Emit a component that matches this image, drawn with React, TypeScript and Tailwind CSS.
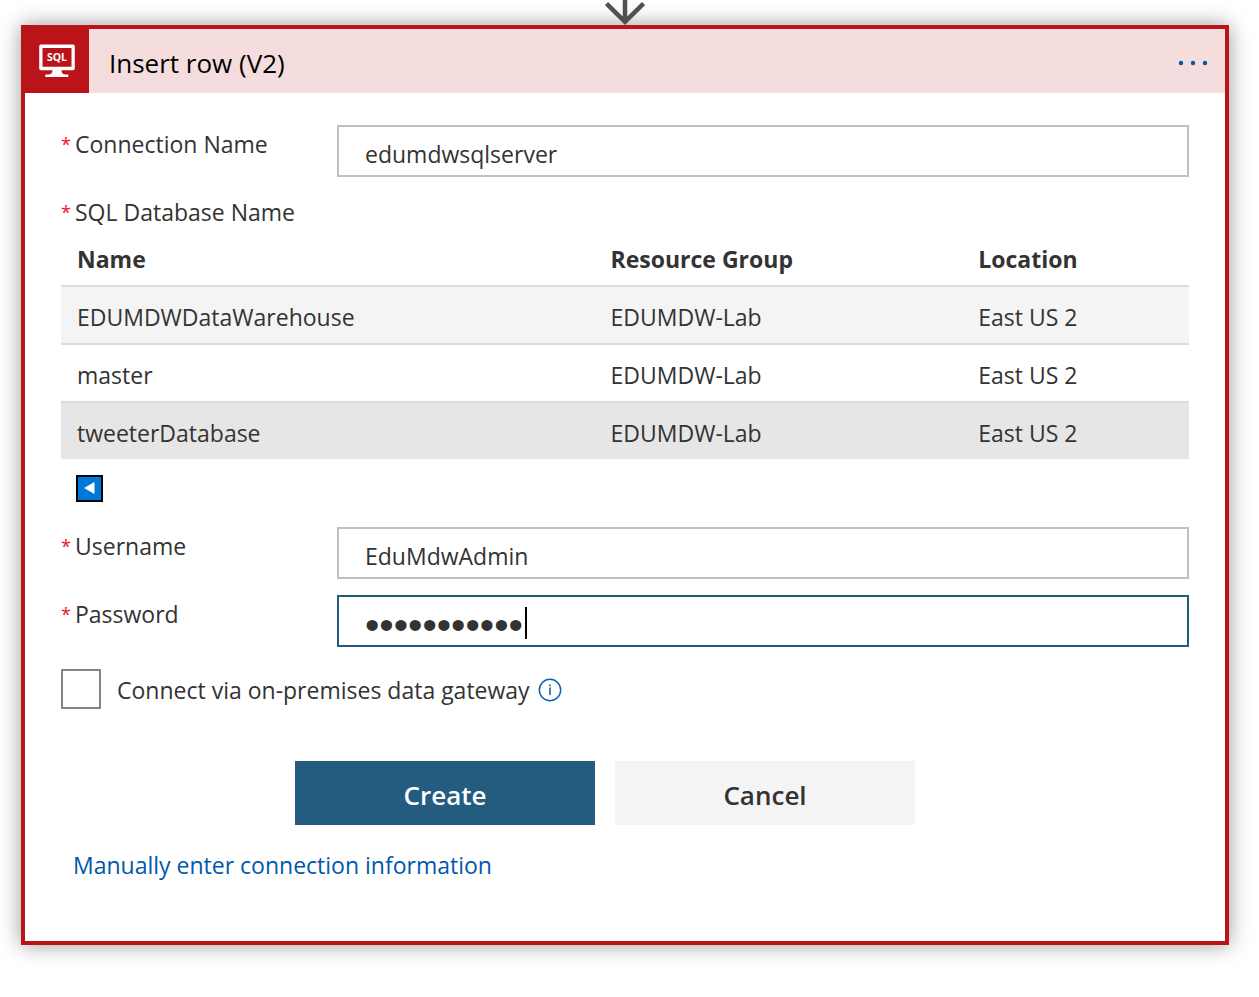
import { useState } from "react";
import type { ReactNode } from "react";

const databases = [
  { name: "EDUMDWDataWarehouse", group: "EDUMDW-Lab", location: "East US 2", row: "bg-[#f4f4f4]" },
  { name: "master", group: "EDUMDW-Lab", location: "East US 2", row: "bg-white" },
  { name: "tweeterDatabase", group: "EDUMDW-Lab", location: "East US 2", row: "bg-[#e6e6e6]" },
];

const inputClass = "block h-[52px] w-full border-2 bg-white px-[26px] leading-8 outline-none";
const cellClass = "border-t-2 border-[#dcdcdc] px-4 pt-1 pb-0";

function Required() {
  return <span className="w-[14px] shrink-0 text-[18px] text-[#e81123]">*</span>;
}

function Field({ id, label, children }: { id: string; label: string; children: ReactNode }) {
  return (
    <div className="flex items-start">
      <label htmlFor={id} className="flex w-[276px] shrink-0 leading-[38px]">
        <Required />
        {label}
      </label>
      <div className="relative min-w-0 grow">{children}</div>
    </div>
  );
}

function SqlIcon() {
  return (
    <svg width="36" height="34" viewBox="0 0 36 34" aria-hidden="true">
      <path
        fill="#fff"
        fillRule="evenodd"
        d="M2 0.500h32a1.800 1.800 0 0 1 1.800 1.800v22.200a1.800 1.800 0 0 1-1.800 1.800H22.500c0 2.700 1 3.700 3.500 4.200h3.300V33h-23v-2.500h3.500c2.500-.5 3.700-1.500 3.700-4.200H2a1.800 1.800 0 0 1-1.800-1.800V2.300A1.800 1.800 0 0 1 2 .5zM3.500 4v18.700h29V4z"
      />
      <text x="18" y="17" textAnchor="middle" fill="#fff" fontSize="10.500" fontWeight="700" fontFamily="Open Sans, sans-serif">
        SQL
      </text>
    </svg>
  );
}

export default function App() {
  const [name, setName] = useState("edumdwsqlserver");
  const [user, setUser] = useState("EduMdwAdmin");
  const [password, setPassword] = useState("placeholder");

  return (
    <main className="bg-white pr-[30px] pb-[52px] pl-[21px] font-['Open_Sans',sans-serif] text-[23px] text-[#333]">
      <div className="flex h-[25px] justify-center">
        <svg width="40" height="25" viewBox="0 0 40 25" className="relative z-10" aria-hidden="true">
          <path d="M20 -4V21M1.500 3.500L20 21.800L38.500 3.500" fill="none" stroke="#505050" strokeWidth="4.500" />
        </svg>
      </div>

      <section className="border-4 border-[#ba141a] bg-white shadow-[0_0_20px_rgba(0,0,0,0.4)]">
        <header className="flex h-16 items-center bg-[#f5dcdd]">
          <div className="flex h-16 w-16 items-center justify-center bg-[#ba141a]">
            <SqlIcon />
          </div>
          <h1 className="grow pt-1 pl-5 text-[26px] text-black">Insert row (V2)</h1>
          <button type="button" aria-label="More options" className="mr-4 flex h-10 w-8 items-center justify-center pt-1">
            <svg width="30" height="6" viewBox="0 0 30 6" fill="#0058ad" aria-hidden="true">
              <circle cx="3" cy="3" r="2.200" />
              <circle cx="15" cy="3" r="2.200" />
              <circle cx="27" cy="3" r="2.200" />
            </svg>
          </button>
        </header>

        <form className="px-9 pt-8 pb-[56px]" onSubmit={(e) => e.preventDefault()}>
          <Field id="connection" label="Connection Name">
            <input
              id="connection"
              className={`${inputClass} border-[#c1c1c1] pt-1.5`}
              value={name}
              onChange={(e) => setName(e.target.value)}
            />
          </Field>

          <div id="database-label" className="mt-4 flex leading-[38px]">
            <Required />
            SQL Database Name
          </div>

          <table
            aria-labelledby="database-label"
            className="mt-0.5 w-full table-fixed border-separate border-spacing-0 text-left"
          >
            <colgroup>
              <col className="w-[47.300%]" />
              <col className="w-[32.600%]" />
              <col />
            </colgroup>
            <thead>
              <tr className="h-[52px]">
                <th className="px-4 py-0 font-bold">Name</th>
                <th className="px-4 py-0 font-bold">Resource Group</th>
                <th className="px-4 py-0 font-bold">Location</th>
              </tr>
            </thead>
            <tbody>
              {databases.map((db) => (
                <tr key={db.name} className={`h-[58px] ${db.row}`}>
                  <td className={cellClass}>{db.name}</td>
                  <td className={cellClass}>{db.group}</td>
                  <td className={cellClass}>{db.location}</td>
                </tr>
              ))}
            </tbody>
          </table>

          <button
            type="button"
            aria-label="Previous page"
            className="mt-4 ml-[15px] flex h-[27px] w-[27px] items-center justify-center border-2 border-black bg-[#0078d7]"
          >
            <svg width="11" height="13" viewBox="0 0 11 13" aria-hidden="true">
              <path d="M0 6L10.500 0V12Z" fill="#fff" />
            </svg>
          </button>

          <div className="mt-[25px] flex flex-col gap-4">
            <Field id="username" label="Username">
              <input
                id="username"
                className={`${inputClass} border-[#c1c1c1] pt-1.5`}
                value={user}
                onChange={(e) => setUser(e.target.value)}
              />
            </Field>
            <Field id="password" label="Password">
              <input
                id="password"
                type="password"
                className={`${inputClass} border-[#235c7e] pt-2 font-['Liberation_Sans',sans-serif] text-[41px]`}
                value={password}
                onChange={(e) => setPassword(e.target.value)}
              />
              <span className="absolute top-3 left-[188px] h-8 w-0.5 bg-black" />
            </Field>
          </div>

          <div className="mt-[22px] flex h-10 items-center">
            <input id="gateway" type="checkbox" className="h-10 w-10 shrink-0 appearance-none border-2 border-[#858585] bg-white" />
            <label htmlFor="gateway" className="pt-0.5 pl-4">
              Connect via on-premises data gateway
            </label>
            <svg width="24" height="24" viewBox="0 0 24 24" className="mt-0.5 ml-2" role="img" aria-label="Information">
              <circle cx="12" cy="12" r="10.700" fill="none" stroke="#0f62b8" strokeWidth="1.500" />
              <path d="M11.200 9.500h1.600V17h-1.600zM11.200 6.500h1.600v1.700h-1.600z" fill="#0f62b8" />
            </svg>
          </div>

          <div className="mt-[52px] flex justify-center gap-5 pr-10 text-[26px] font-semibold">
            <button type="submit" className="h-16 w-[300px] bg-[#235c7e] pt-1 text-white">
              Create
            </button>
            <button type="button" className="h-16 w-[300px] bg-[#f4f4f4] pt-1">
              Cancel
            </button>
          </div>

          <a href="#manual" className="mt-5 ml-3 block w-fit leading-10 text-[#0058ad]">
            Manually enter connection information
          </a>
        </form>
      </section>
    </main>
  );
}
